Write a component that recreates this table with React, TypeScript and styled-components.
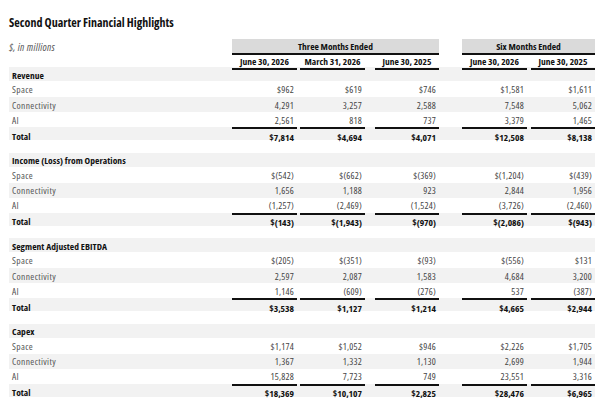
import React from "react";
import styled, { createGlobalStyle } from "styled-components";

const GlobalStyle = createGlobalStyle`
  html, body { margin: 0; padding: 0; background: #ffffff; }
  body {
    font-family: "Open Sans", "Roboto Condensed", "Liberation Sans", sans-serif;
    font-stretch: 75%;
    -webkit-font-smoothing: antialiased;
  }
`;

const COLS = "223px 65px 3px 65px 10px 64px 23px 65px 4px 64px";
const COL_LINES = [2, 4, 6, 8, 10];

const Page = styled.div`
  width: 600px;
  height: 408px;
  box-sizing: border-box;
  padding: 15px 5px 0 9px;
  overflow: hidden;
`;

const Title = styled.h1`
  margin: 0 0 9px 0;
  font-size: 12px;
  line-height: 15px;
  font-weight: 700;
  color: #111;
`;

const Row = styled.div<{ $bg?: boolean; $h: number; $gapAfter?: number }>`
  display: grid;
  grid-template-columns: ${COLS};
  height: ${(p) => p.$h}px;
  background: ${(p) => (p.$bg ? "#f2f2f2" : "transparent")};
  margin-bottom: ${(p) => p.$gapAfter ?? 0}px;
`;

const Unit = styled.div`
  grid-column: 1;
  display: flex;
  align-items: center;
  font-size: 10.5px;
  font-style: italic;
  letter-spacing: 0.3px;
  color: #555;
`;

const GroupHead = styled.div<{ $from: number; $to: number }>`
  grid-column: ${(p) => p.$from} / ${(p) => p.$to};
  background: #dadada;
  border-bottom: 2px solid #111;
  display: flex;
  align-items: center;
  justify-content: center;
  font-size: 9.5px;
  font-weight: 700;
  color: #111;
  padding-top: 1px;
`;

const SubHead = styled.div<{ $col: number }>`
  grid-column: ${(p) => p.$col};
  border-bottom: 2px solid #111;
  display: flex;
  align-items: center;
  justify-content: center;
  font-size: 9.5px;
  font-weight: 700;
  color: #111;
  white-space: nowrap;
  padding-top: 1px;
`;

const Label = styled.div<{ $bold?: boolean }>`
  grid-column: 1;
  display: flex;
  align-items: center;
  padding: 1.5px 0 0 3px;
  font-size: 9.5px;
  font-weight: ${(p) => (p.$bold ? 700 : 400)};
  letter-spacing: ${(p) => (p.$bold ? "0.05px" : "0.35px")};
  color: ${(p) => (p.$bold ? "#111" : "#555")};
  white-space: nowrap;
`;

const Value = styled.div<{ $col: number; $bold?: boolean; $rule?: boolean }>`
  grid-column: ${(p) => p.$col};
  display: flex;
  align-items: center;
  justify-content: flex-end;
  padding: 1.5px 3px 0 0;
  font-size: 9.5px;
  font-weight: ${(p) => (p.$bold ? 700 : 400)};
  letter-spacing: ${(p) => (p.$bold ? "0" : "0.2px")};
  color: ${(p) => (p.$bold ? "#111" : "#444")};
  border-top: ${(p) => (p.$rule ? "2px solid #111" : "none")};
  box-sizing: border-box;
  white-space: nowrap;
`;

type Section = {
  title: string;
  rows: [string, string[]][];
  total: string[];
};

const sections: Section[] = [
  {
    title: "Revenue",
    rows: [
      ["Space", ["$962", "$619", "$746", "$1,581", "$1,611"]],
      ["Connectivity", ["4,291", "3,257", "2,588", "7,548", "5,062"]],
      ["AI", ["2,561", "818", "737", "3,379", "1,465"]],
    ],
    total: ["$7,814", "$4,694", "$4,071", "$12,508", "$8,138"],
  },
  {
    title: "Income (Loss) from Operations",
    rows: [
      ["Space", ["$(542)", "$(662)", "$(369)", "$(1,204)", "$(439)"]],
      ["Connectivity", ["1,656", "1,188", "923", "2,844", "1,956"]],
      ["AI", ["(1,257)", "(2,469)", "(1,524)", "(3,726)", "(2,460)"]],
    ],
    total: ["$(143)", "$(1,943)", "$(970)", "$(2,086)", "$(943)"],
  },
  {
    title: "Segment Adjusted EBITDA",
    rows: [
      ["Space", ["$(205)", "$(351)", "$(93)", "$(556)", "$131"]],
      ["Connectivity", ["2,597", "2,087", "1,583", "4,684", "3,200"]],
      ["AI", ["1,146", "(609)", "(276)", "537", "(387)"]],
    ],
    total: ["$3,538", "$1,127", "$1,214", "$4,665", "$2,944"],
  },
  {
    title: "Capex",
    rows: [
      ["Space", ["$1,174", "$1,052", "$946", "$2,226", "$1,705"]],
      ["Connectivity", ["1,367", "1,332", "1,130", "2,699", "1,944"]],
      ["AI", ["15,828", "7,723", "749", "23,551", "3,316"]],
    ],
    total: ["$18,369", "$10,107", "$2,825", "$28,476", "$6,965"],
  },
];

const headers = ["June 30, 2026", "March 31, 2026", "June 30, 2025", "June 30, 2026", "June 30, 2025"];
const rowHeights = [16, 15, 15];

export default function App() {
  return (
    <>
      <GlobalStyle />
      <Page>
        <Title>Second Quarter Financial Highlights</Title>
        <Row $h={15}>
          <Unit>$, in millions</Unit>
          <GroupHead $from={2} $to={7}>Three Months Ended</GroupHead>
          <GroupHead $from={8} $to={11}>Six Months Ended</GroupHead>
        </Row>
        <Row $h={13}>
          {headers.map((h, i) => (
            <SubHead key={i} $col={COL_LINES[i]}>{h}</SubHead>
          ))}
        </Row>
        {sections.map((s, si) => (
          <React.Fragment key={s.title}>
            <Row $h={14} $bg>
              <Label $bold>{s.title}</Label>
            </Row>
            {s.rows.map(([name, vals], ri) => (
              <Row key={name} $h={rowHeights[ri]} $bg={ri === 1}>
                <Label>{name}</Label>
                {vals.map((v, i) => (
                  <Value key={i} $col={COL_LINES[i]}>{v}</Value>
                ))}
              </Row>
            ))}
            <Row $h={13} $bg $gapAfter={si < sections.length - 1 ? 12.5 : 0}>
              <Label $bold>Total</Label>
              {s.total.map((v, i) => (
                <Value key={i} $col={COL_LINES[i]} $bold $rule>{v}</Value>
              ))}
            </Row>
          </React.Fragment>
        ))}
      </Page>
    </>
  );
}
